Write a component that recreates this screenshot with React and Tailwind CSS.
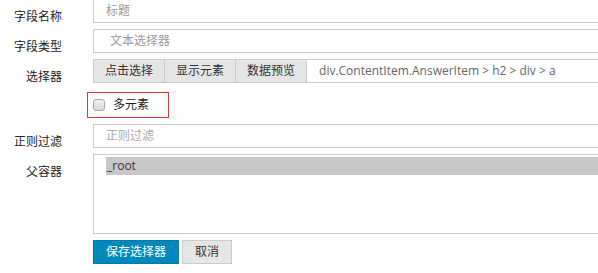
import React from "react";

const Label = ({ children }) => (
    <div className="w-[62px] shrink-0 pt-[11px] text-right text-[12px] leading-[14px] text-[#222]">
        {children}
    </div>
);

const TextBox = ({ value, className = "" }) => (
    <div className={`ml-[31px] h-[24px] w-[520px] shrink-0 border border-[#ccc] bg-white flex items-center text-[12px] text-[#999] ${className}`}>
        {value}
    </div>
);

const App = () => {
    const tools = ["点击选择", "显示元素", "数据预览"];

    return (
        <div className="w-[598px] h-[273px] overflow-hidden bg-white font-['Open_Sans','Noto_Sans_CJK_SC',sans-serif]">
            <div className="flex flex-col -mt-px">
                {/* Field name */}
                <div className="flex items-start h-[24px]">
                    <Label>字段名称</Label>
                    <TextBox value="标题" className="pl-[12px]" />
                </div>

                {/* Field type */}
                <div className="flex items-start h-[24px] mt-[6px]">
                    <Label>字段类型</Label>
                    <TextBox value="文本选择器" className="pl-[16px]" />
                </div>

                {/* Selector */}
                <div className="flex items-start h-[24px] mt-[6px]">
                    <Label>选择器</Label>
                    <div className="ml-[31px] flex h-[24px] w-[520px] shrink-0">
                        {tools.map((t, i) => (
                            <button
                                key={t}
                                className={`h-[24px] px-[11px] border border-[#ccc] bg-[#e6e6e6] text-[12px] text-[#333] leading-none ${i > 0 ? "border-l-0" : ""}`}
                            >
                                {t}
                            </button>
                        ))}
                        <div className="flex-1 h-[24px] border border-l-0 border-[#ccc] pl-[12px] flex items-center text-[12px] text-[#666]">
                            div.ContentItem.AnswerItem &gt; h2 &gt; div &gt; a
                        </div>
                    </div>
                </div>

                {/* Multiple */}
                <div className="flex mt-[9px]">
                    <div className="ml-[87px] w-[82px] h-[26px] border border-[#e53935] flex items-center pl-[5px]">
                        <span className="w-[12px] h-[12px] rounded-[3px] border border-[#a6a6a6] bg-gradient-to-b from-[#f4f4f4] to-[#d8d8d8]" />
                        <span className="ml-[8px] text-[12px] text-[#222]">多元素</span>
                    </div>
                </div>

                {/* Regex filter */}
                <div className="flex items-start h-[24px] mt-[6px]">
                    <Label>正则过滤</Label>
                    <TextBox value="正则过滤" className="pl-[12px] text-[#aaa]" />
                </div>

                {/* Parent */}
                <div className="flex items-start mt-[6px]">
                    <Label>父容器</Label>
                    <div className="ml-[31px] h-[80px] w-[520px] shrink-0 border border-[#ccc] bg-white pt-[2px] pl-[12px]">
                        <div className="h-[18px] bg-[#c8c8c8] pl-[1px] text-[12px] leading-[18px] text-[#3a2f45]">
                            _root
                        </div>
                    </div>
                </div>

                {/* Actions */}
                <div className="flex mt-[6px] ml-[93px] gap-[3px]">
                    <button className="h-[24px] w-[86px] border border-[#007aa6] bg-[#0089ba] text-[12px] text-white leading-none">
                        保存选择器
                    </button>
                    <button className="h-[24px] w-[50px] border border-[#ccc] bg-[#e6e6e6] text-[12px] text-[#333] leading-none">
                        取消
                    </button>
                </div>
            </div>
        </div>
    );
};

export default App;
